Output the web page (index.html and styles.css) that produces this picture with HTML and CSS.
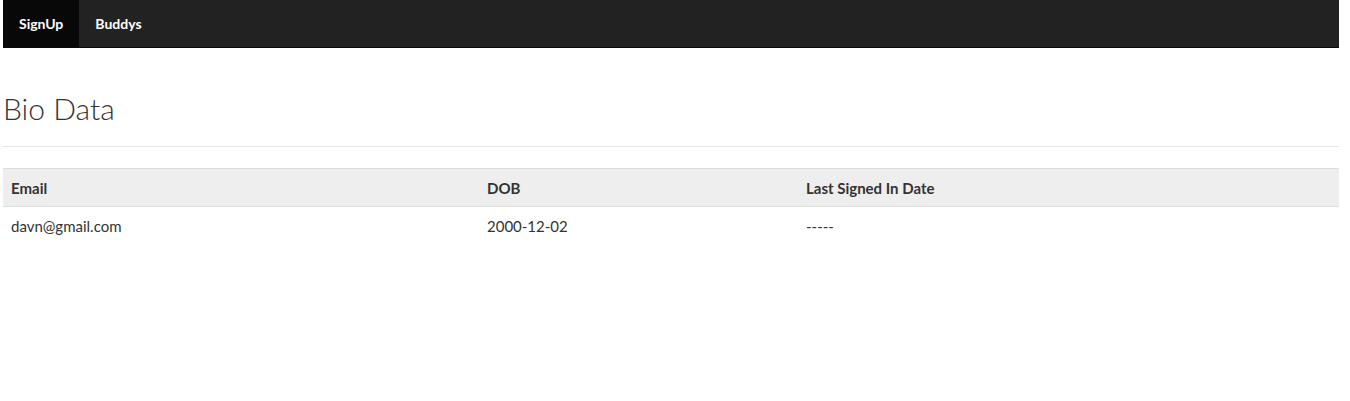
FILE: index.html
```html
<!DOCTYPE html>
<html>
<head>
<meta charset="utf-8">
<link rel="stylesheet" href="styles.css">
</head>
<body>
<div class="page">
  <nav class="navbar">
    <a class="nav-link active" href="#">SignUp</a>
    <a class="nav-link" href="#">Buddys</a>
  </nav>
  <div class="page-header">
    <h1 class="title">Bio Data</h1>
  </div>
  <table class="data-table">
    <thead>
      <tr>
        <th class="col-email">Email</th>
        <th class="col-dob">DOB</th>
        <th class="col-last">Last Signed In Date</th>
      </tr>
    </thead>
    <tbody>
      <tr>
        <td>davn@gmail.com</td>
        <td>2000-12-02</td>
        <td>-----</td>
      </tr>
    </tbody>
  </table>
</div>
</body>
</html>
```
FILE: styles.css
```css
html, body {
  margin: 0;
  padding: 0;
  background: #fff;
}
body {
  font-family: "Source Sans Pro", Lato, "Liberation Sans", sans-serif;
  font-size: 15px;
  color: #333;
}
.page {
  margin: 0 11px 0 3px;
}
.navbar {
  display: flex;
  height: 48px;
  background: #222;
  border-bottom: 1px solid #090909;
  box-sizing: border-box;
}
.nav-link {
  display: flex;
  align-items: center;
  padding: 0 15px 0 16px;
  color: #fff;
  font-weight: 700;
  text-decoration: none;
  font-size: 14px;
}
.nav-link.active {
  background: #080808;
  padding-right: 16px;
}
.page-header {
  margin-top: 40px;
  padding-bottom: 18px;
  border-bottom: 1px solid #e5e5e5;
}
.title {
  margin: 0;
  font-weight: 300;
  font-size: 30px;
  line-height: 40px;
  color: #333;
}
.data-table {
  width: 100%;
  margin-top: 21px;
  border-collapse: collapse;
  border-top: 1px solid #ddd;
}
.data-table th,
.data-table td {
  text-align: left;
  padding: 0 8px;
  height: 38px;
  line-height: 20px;
  vertical-align: middle;
}
.data-table th {
  height: 37px;
  font-weight: 700;
  background: #eee;
  border-bottom: 1px solid #ddd;
}
.data-table td {
  padding-bottom: 2px;
}
.col-email { width: 460px; }
.col-dob { width: 303px; }
```
